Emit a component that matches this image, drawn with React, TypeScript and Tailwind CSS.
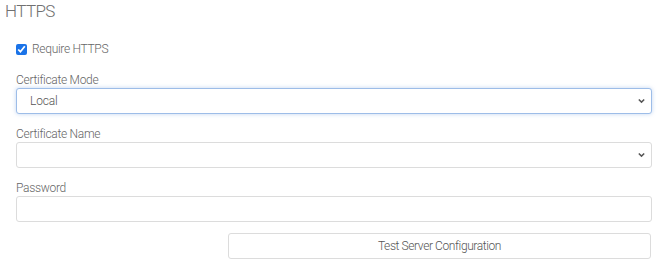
import React from "react";

const Chevron = () => (
  <svg width="7" height="5" viewBox="0 0 7 5" className="absolute right-[6px] top-1/2 -translate-y-1/2">
    <path d="M0.8 1l2.7 2.6L6.2 1" fill="none" stroke="#555" strokeWidth="1.5" />
  </svg>
);

const Field: React.FC<{ label: string; children: React.ReactNode }> = ({ label, children }) => (
  <div className="flex flex-col">
    <label className="text-[12px] leading-[14px] text-[#666] tracking-[-0.3px] mb-[1px]">{label}</label>
    {children}
  </div>
);

export default function App() {
  return (
    <div
      className="w-[669px] h-[269px] bg-white text-[#666] overflow-hidden font-light"
      style={{ fontFamily: "Roboto, 'Liberation Sans', sans-serif" }}
    >
      <h2 className="pl-[5px] pt-[1px] text-[17px] leading-[20px] text-[#707070] font-light tracking-[-0.6px]">HTTPS</h2>
      <div className="pl-[16px] pr-[17px] pt-[21px]">
        <label className="flex items-center gap-[5px] h-[14px] text-[12px] text-[#666] tracking-[-0.3px]">
          <input type="checkbox" defaultChecked className="w-[11px] h-[11px] m-0 accent-[#1a73e8]" />
          Require HTTPS
        </label>
        <div className="mt-[17px] flex flex-col gap-[13px]">
          <Field label="Certificate Mode">
            <div className="relative h-[26px] rounded-[3px] border border-[#9dbde8] shadow-[0_0_4px_rgba(120,165,225,0.45)] bg-white flex items-center pl-[13px] text-[12px] text-[#555] tracking-[-0.2px]">
              Local
              <Chevron />
            </div>
          </Field>
          <Field label="Certificate Name">
            <div className="relative h-[26px] rounded-[3px] border border-[#dcdcdc] bg-white">
              <Chevron />
            </div>
          </Field>
          <Field label="Password">
            <div className="h-[26px] rounded-[3px] border border-[#dcdcdc] bg-white" />
          </Field>
        </div>
        <div className="mt-[11px] flex justify-end pr-[1px]">
          <button className="w-[423px] h-[26px] rounded-[3px] border border-[#dcdcdc] bg-white text-[12px] text-[#555] font-light tracking-[-0.4px]">
            Test Server Configuration
          </button>
        </div>
      </div>
    </div>
  );
}
